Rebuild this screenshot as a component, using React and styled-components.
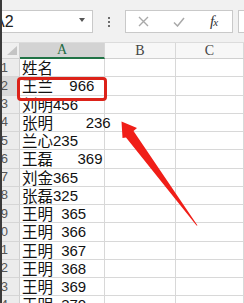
import React from "react";
import styled, { createGlobalStyle } from "styled-components";

const GlobalStyle = createGlobalStyle`
  html, body {
    margin: 0;
    padding: 0;
    background: #fff;
  }
`;

const rows = [
  "姓名",
  "王兰  966",
  "刘明456",
  "张明    236",
  "兰心235",
  "王磊   369",
  "刘金365",
  "张磊325",
  "王明 365",
  "王明 366",
  "王明 367",
  "王明 368",
  "王明 369",
  "王明 370",
];

const Screen = styled.div`
  position: relative;
  width: 244px;
  height: 303px;
  box-sizing: border-box;
  border-left: 2px solid #3b3b3b;
  overflow: hidden;
  background: #fff;
`;

const TopBar = styled.div`
  display: flex;
  align-items: flex-start;
  height: 43px;
  box-sizing: border-box;
  padding-top: 10px;
  background: #f1f1f1;
  border-bottom: 1px solid #dcdcdc;
`;

const NameBox = styled.div`
  display: flex;
  align-items: center;
  flex: none;
  width: 112px;
  height: 23px;
  margin-left: -21px;
  box-sizing: border-box;
  padding: 0 7px 0 12px;
  background: #fff;
  border: 1px solid #c9c9c9;
  font: 16px "Liberation Sans", sans-serif;
  color: #222;
`;

const Caret = styled.span`
  margin-left: auto;
  width: 0;
  height: 0;
  border-left: 3px solid transparent;
  border-right: 3px solid transparent;
  border-top: 4px solid #555;
  margin-top: -4px;
`;

const Dots = styled.div`
  flex: none;
  width: 32px;
  height: 23px;
  display: flex;
  flex-direction: column;
  align-items: center;
  justify-content: center;
  gap: 2px;

  span {
    width: 2px;
    height: 2px;
    background: #6d6d6d;
  }
`;

const FormulaBox = styled.div`
  flex: none;
  display: flex;
  align-items: center;
  width: 108px;
  height: 23px;
  box-sizing: border-box;
  background: #fff;
  border: 1px solid #c9c9c9;
`;

const IconSlot = styled.div`
  width: 35px;
  display: flex;
  justify-content: center;
  align-items: center;
  color: ${({ dark }) => (dark ? "#333" : "#a9a9a9")};
`;

const Fx = styled.span`
  font: italic 15px "Liberation Serif", serif;
  color: #333;
  letter-spacing: -1px;

  sub {
    font-size: 11px;
    vertical-align: baseline;
  }
`;

const FormulaInput = styled.div`
  flex: 1;
  height: 23px;
  margin-left: 5px;
  margin-right: -20px;
  box-sizing: border-box;
  background: #fff;
  border: 1px solid #c9c9c9;
`;

const Sheet = styled.div`
  display: grid;
  grid-template-columns: 18px 85px 71px 1fr;
  grid-template-rows: 16px;
  grid-auto-rows: 18.25px;
  background: #fff;
`;

const Corner = styled.div`
  position: relative;
  background: #efefef;
  border-right: 1px solid #d0d0d0;
  border-bottom: 1px solid #d0d0d0;
  box-sizing: border-box;

  &::after {
    content: "";
    position: absolute;
    right: 2px;
    bottom: 3px;
    width: 0;
    height: 0;
    border-left: 10px solid transparent;
    border-bottom: 9px solid #c4c4c4;
  }
`;

const ColHead = styled.div`
  display: flex;
  align-items: center;
  justify-content: center;
  box-sizing: border-box;
  font: 14px/16px "Liberation Serif", serif;
  color: ${({ active }) => (active ? "#1f6b43" : "#444")};
  background: ${({ active }) => (active ? "#d3d3d3" : "#f7f7f7")};
  border-right: 1px solid #d8d8d8;
  border-bottom: ${({ active }) =>
    active ? "2px solid #217346" : "1px solid #d0d0d0"};
`;

const RowHead = styled.div`
  display: flex;
  align-items: center;
  justify-content: flex-end;
  box-sizing: border-box;
  overflow: hidden;
  white-space: nowrap;
  padding-right: 11px;
  font: 13px/16px "Liberation Sans", sans-serif;
  color: #555;
  background: ${({ active }) => (active ? "#d9d9d9" : "#ececec")};
  border-right: 1px solid #d0d0d0;
  border-bottom: 1px solid #d6d6d6;
`;

const Cell = styled.div`
  display: flex;
  align-items: center;
  box-sizing: border-box;
  padding-left: 2px;
  white-space: pre;
  line-height: 17px;
  border-right: 1px solid #d8d8d8;
  border-bottom: 1px solid #d8d8d8;
  color: #111;
`;

const Name = styled.span`
  font: 15.5px/17px "Noto Sans CJK SC", sans-serif;
`;

const Num = styled.span`
  font: 15px/17px "Liberation Sans", sans-serif;
  word-spacing: 4px;
`;

const Mark = styled.div`
  position: absolute;
  left: 15px;
  top: 77px;
  width: 90px;
  height: 24px;
  box-sizing: border-box;
  border: 3.5px solid #dc2219;
  border-radius: 4px;
`;

const Overlay = styled.svg`
  position: absolute;
  left: -2px;
  top: 0;
  pointer-events: none;
`;

function splitText(s) {
  const m = s.match(/^(\D*?)(\s*\d*)$/);
  return [m[1], m[2]];
}

export default function App() {
  return (
    <>
      <GlobalStyle />
      <Screen>
        <TopBar>
          <NameBox>
            <span>A2</span>
            <Caret />
          </NameBox>
          <Dots>
            <span />
            <span />
            <span />
          </Dots>
          <FormulaBox>
            <IconSlot>
              <svg width="11" height="11" viewBox="0 0 11 11">
                <path d="M1 1L10 10M10 1L1 10" stroke="currentColor" strokeWidth="1.4" />
              </svg>
            </IconSlot>
            <IconSlot>
              <svg width="12" height="10" viewBox="0 0 12 10">
                <path d="M1 5.5L4.5 9L11 1" stroke="currentColor" strokeWidth="1.5" fill="none" />
              </svg>
            </IconSlot>
            <IconSlot dark>
              <Fx>
                f<sub>x</sub>
              </Fx>
            </IconSlot>
          </FormulaBox>
          <FormulaInput />
        </TopBar>

        <Sheet>
          <Corner />
          <ColHead active>A</ColHead>
          <ColHead>B</ColHead>
          <ColHead>C</ColHead>
          {rows.map((text, i) => {
            const [name, num] = splitText(text);
            return (
              <React.Fragment key={i}>
                <RowHead active={i === 1}>{i + 1}</RowHead>
                <Cell>
                  <Name>{name}</Name>
                  {num && <Num>{num}</Num>}
                </Cell>
                <Cell />
                <Cell />
              </React.Fragment>
            );
          })}
        </Sheet>

        <Mark />
        <Overlay width="244" height="303" viewBox="0 0 244 303">
          <polygon
            points="121.5,121.5 137,128 133.5,131 197.5,225.5 196.5,225.5 126,137.5 122.5,138"
            fill="#f01e18"
          />
        </Overlay>
      </Screen>
    </>
  );
}
